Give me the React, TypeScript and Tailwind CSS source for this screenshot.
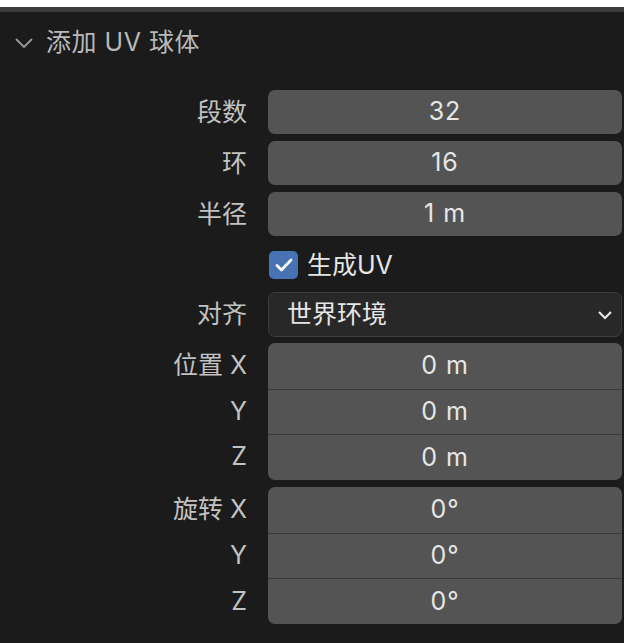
import React from "react";

const font = { fontFamily: 'Inter, "Noto Sans CJK SC", sans-serif' };

const Label = ({ children }: { children?: React.ReactNode }) => (
  <div className="w-[247px] shrink-0 text-right text-[25px] leading-none text-[#c2c2c2]">
    {children}
  </div>
);

const NumField = ({ value }: { value: string }) => (
  <div className="flex h-[44px] flex-1 items-center justify-center rounded-[7px] bg-[#545454] text-[25px] tracking-[1px] text-[#e6e6e6]">
    {value}
  </div>
);

const VectorGroup = ({ title, values }: { title: string; values: string[] }) => (
  <div className="flex">
    <div className="flex w-[247px] shrink-0 flex-col">
      {["X", "Y", "Z"].map((axis, i) => (
        <div
          key={axis}
          className="flex h-[45.7px] items-center justify-end text-[25px] text-[#c2c2c2]"
        >
          {i === 0 ? `${title} ${axis}` : axis}
        </div>
      ))}
    </div>
    <div className="ml-[21px] mr-[2px] flex flex-1 flex-col overflow-hidden rounded-[7px] bg-[#545454]">
      {values.map((v, i) => (
        <div
          key={i}
          className={
            "flex h-[45.7px] items-center justify-center text-[25px] tracking-[1px] text-[#e6e6e6] " +
            (i > 0 ? "border-t border-[#3a3a3a]" : "")
          }
        >
          {v}
        </div>
      ))}
    </div>
  </div>
);

export default function App() {
  return (
    <div className="h-[643px] w-[624px] overflow-hidden bg-white" style={font}>
      <div className="mt-[7px] h-[636px] border-t-[5px] border-[#3b3b3b] bg-[#1b1b1b]">
        {/* header */}
        <div className="flex h-[60px] items-center pl-[14px]">
          <svg width="20" height="12" viewBox="0 0 20 12" className="mr-[12px] mt-[1px]">
            <path d="M2 2 L10 10 L18 2" fill="none" stroke="#9a9a9a" strokeWidth="1.8" />
          </svg>
          <span className="text-[25px] leading-none tracking-[0.5px] text-[#b8b8b8]">添加 UV 球体</span>
        </div>

        <div className="mt-[18px] flex flex-col">
          {[
            ["段数", "32"],
            ["环", "16"],
            ["半径", "1 m"],
          ].map(([label, value]) => (
            <div key={label} className="mb-[7px] flex items-center">
              <Label>{label}</Label>
              <div className="ml-[21px] mr-[2px] flex flex-1">
                <NumField value={value} />
              </div>
            </div>
          ))}

          {/* checkbox */}
          <div className="flex h-[44px] items-center">
            <div className="ml-[269px] flex items-center gap-[9px]">
              <div className="flex h-[28px] w-[29px] items-center justify-center rounded-[5px] bg-[#4772b3]">
                <svg width="18" height="14" viewBox="0 0 18 14">
                  <path
                    d="M2 7.5 L6.5 12 L16 2"
                    fill="none"
                    stroke="#ffffff"
                    strokeWidth="2.8"
                    strokeLinecap="round"
                    strokeLinejoin="round"
                  />
                </svg>
              </div>
              <span className="text-[25px] leading-none text-[#e6e6e6]">生成UV</span>
            </div>
          </div>

          {/* dropdown */}
          <div className="mt-[5px] flex items-center">
            <Label>对齐</Label>
            <div className="ml-[21px] mr-[2px] flex h-[45px] flex-1 items-center justify-between rounded-[7px] border border-[#3d3d3d] bg-[#282828] pl-[18px] pr-[8px]">
              <span className="text-[25px] text-[#e6e6e6]">世界环境</span>
              <svg width="16" height="10" viewBox="0 0 16 10">
                <path d="M2 2 L8 8 L14 2" fill="none" stroke="#e6e6e6" strokeWidth="2.2" />
              </svg>
            </div>
          </div>

          <div className="mt-[6px]">
            <VectorGroup title="位置" values={["0 m", "0 m", "0 m"]} />
          </div>
          <div className="mt-[7px]">
            <VectorGroup title="旋转" values={["0°", "0°", "0°"]} />
          </div>
        </div>
      </div>
    </div>
  );
}
